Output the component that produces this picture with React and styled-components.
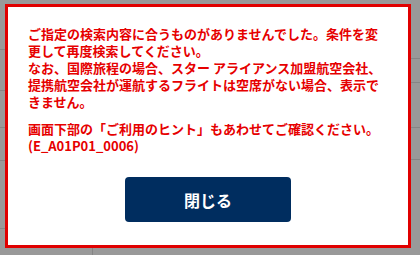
import React from "react";
import styled, { createGlobalStyle } from "styled-components";

const GlobalStyle = createGlobalStyle`
  html, body {
    margin: 0;
    padding: 0;
    background: #999999;
  }
  body {
    font-family: "Noto Sans CJK JP", "Noto Sans", sans-serif;
  }
`;

const Screen = styled.div`
  position: relative;
  width: 420px;
  height: 255px;
  overflow: hidden;
  background: #999999;
`;

/* dimmed page under the dialog */
const Page = styled.div`
  display: flex;
  height: 100%;
`;

const Column = styled.div`
  display: flex;
  flex-direction: column;
  width: ${(p) => p.width};
  flex: ${(p) => (p.grow ? 1 : "none")};
`;

const Row = styled.div`
  height: ${(p) => p.h}px;
  flex: none;
  border-bottom: ${(p) => (p.line ? "1px solid #858585" : "none")};
  box-sizing: border-box;
`;

const FieldBox = styled.div`
  margin: 4px 0 0 ${(p) => p.left}px;
  width: 30px;
  height: 18px;
  background: #8e8e8e;
  border-radius: 2px;
`;

const Caret = styled.div`
  display: flex;
  align-items: flex-start;
  height: 100%;
  padding-left: 80px;
  & > span {
    display: block;
    width: 12px;
    height: 100%;
    border-right: 1px solid #858585;
  }
`;

const Dialog = styled.div`
  position: absolute;
  left: 5px;
  top: 4px;
  width: 406px;
  height: 244px;
  box-sizing: border-box;
  border: 3px solid #e00000;
  background: #ffffff;
  display: flex;
  flex-direction: column;
  padding: 18px 20px 0 20px;
`;

const Message = styled.p`
  margin: 0 0 ${(p) => p.gap || 0}px 0;
  color: #e60000;
  font-size: 13px;
  font-weight: 700;
  line-height: 17px;
  line-break: strict;
`;

const Actions = styled.div`
  display: flex;
  justify-content: center;
  margin-top: 23px;
`;

const CloseButton = styled.button`
  width: 166px;
  height: 45px;
  border: none;
  border-radius: 4px;
  background: #002d5f;
  color: #ffffff;
  font-family: "Noto Sans CJK JP", "Noto Sans", sans-serif;
  font-size: 16px;
  font-weight: 700;
  cursor: pointer;
`;

const App = () => {
  return (
    <Screen>
      <GlobalStyle />
      <Page>
        <Column width="200px">
          <Row h={50} line />
          <Row h={41} line />
          <Row h={37} line />
          <Row h={33} line />
          <Row h={68} line />
          <Row h={26}>
            <Caret>
              <span>
                <svg width="10" height="7" viewBox="0 0 10 7" style={{ marginTop: 2 }}>
                  <path d="M1.5 1.5 L5 5 L8.5 1.5" fill="none" stroke="#222" strokeWidth="2" />
                </svg>
              </span>
            </Caret>
          </Row>
        </Column>
        <Column grow>
          <Row h={59} line />
          <Row h={24} line>
            <FieldBox left={7} />
          </Row>
          <Row h={45} line />
          <Row h={32} line />
        </Column>
      </Page>
      <Dialog>
        <Message gap={10}>
          ご指定の検索内容に合うものがありませんでした。条件を変更して再度検索してください。
          <br />
          なお、国際旅程の場合、スター アライアンス加盟航空会社、提携航空会社が運航するフライトは空席がない場合、表示できません。
        </Message>
        <Message>
          画面下部の「ご利用のヒント」もあわせてご確認ください。
          <br />
          (E_A01P01_0006)
        </Message>
        <Actions>
          <CloseButton>閉じる</CloseButton>
        </Actions>
      </Dialog>
    </Screen>
  );
};

export default App;
